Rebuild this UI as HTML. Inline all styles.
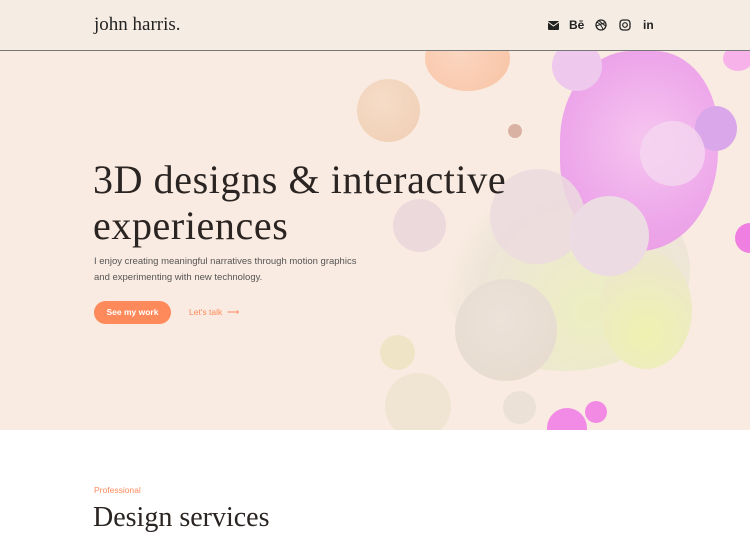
<!DOCTYPE html><html><head><style>
html,body{margin:0;width:750px;height:523px;overflow:hidden;background:#fff;font-family:"Liberation Sans",sans-serif}
.hd{position:absolute;left:0;top:0;width:750px;height:50px;background:#f5ede3;border-bottom:1px solid #777;z-index:5}
.logo{position:absolute;left:94px;top:14px;font:19px "Liberation Serif",serif;color:#222}
.ic{position:absolute;top:19px;height:14px;font-size:12px;font-weight:bold;color:#222}
.hero{position:absolute;left:0;top:51px;width:750px;height:379px;background:#f9ebe1;overflow:hidden}
.b{position:absolute;border-radius:50%}
h1{position:absolute;left:93px;top:157px;margin:0;font:400 40px/46px "Liberation Serif",serif;letter-spacing:0.6px;color:#2a2422;z-index:3}
p{position:absolute;left:94px;top:254px;margin:0;font-size:9.5px;line-height:16px;color:#555;z-index:3}
.btn{position:absolute;left:94px;top:301px;width:77px;height:23px;border-radius:12px;background:#fe8a5b;color:#fff;font-size:8.5px;font-weight:bold;text-align:center;line-height:23px;z-index:3}
.lt{position:absolute;left:189px;top:307px;font-size:8.5px;color:#fe8a5b;z-index:3}
</style></head><body>
<div class="hd"><div class="logo">john harris.</div>
<svg class="ic" style="left:548px;top:21px" width="11" height="9"><rect width="11" height="9" rx="1" fill="#222"/><path d="M0 1L5.5 5L11 1" stroke="#f5ede3" fill="none"/></svg>
<div class="ic" style="left:569px;top:18px">Bē</div>
<svg class="ic" style="left:595px;top:19px" width="12" height="12"><circle cx="6" cy="6" r="5" stroke="#222" fill="none" stroke-width="1.3"/><path d="M2 3Q7 6 8 11M1.5 7Q6 5 10.5 3.5M4 1.5Q7 5 11 7" stroke="#222" fill="none"/></svg>
<svg class="ic" style="left:619px;top:19px" width="12" height="12"><rect x="1" y="1" width="10" height="10" rx="3" stroke="#222" fill="none" stroke-width="1.3"/><circle cx="6" cy="6" r="2.3" stroke="#222" fill="none" stroke-width="1.2"/></svg>
<div class="ic" style="left:643px;top:18px">in</div></div>
<div class="hero">
<div class="b" style="left:425px;top:-25px;width:85px;height:65px;background:radial-gradient(circle at 40% 40%,#fbd6c0,#f8c3a4)"></div>
<div class="b" style="left:357px;top:28px;width:63px;height:63px;background:radial-gradient(circle at 40% 35%,#f6dcc8,#efceb3)"></div>
<div class="b" style="left:508px;top:73px;width:14px;height:14px;background:#d9b2a3"></div>
<div style="position:absolute;left:440px;top:120px;width:250px;height:200px;border-radius:50%;background:radial-gradient(circle at 60% 70%,#ecefc0,#eee5d8 55%,rgba(240,226,215,0) 72%)"></div>
<div style="position:absolute;left:560px;top:0;width:158px;height:200px;border-radius:45% 40% 50% 45%;background:radial-gradient(circle at 55% 45%,#f6c6ef,#eda6ea 60%,#e89ae0)"></div>
<div class="b" style="left:552px;top:-10px;width:50px;height:50px;background:#efc8ee"></div>
<div class="b" style="left:695px;top:55px;width:42px;height:45px;background:#d9a7ea"></div>
<div class="b" style="left:723px;top:-5px;width:30px;height:25px;background:#f6b2e9"></div>
<div class="b" style="left:735px;top:172px;width:30px;height:30px;background:#ef7fe0"></div>
<div class="b" style="left:600px;top:200px;width:92px;height:118px;background:radial-gradient(circle at 50% 70%,#eef2b0,#ede8c8 70%,rgba(237,232,210,.5))"></div>
<div class="b" style="left:490px;top:118px;width:95px;height:95px;background:rgba(236,218,222,.85)"></div>
<div class="b" style="left:569px;top:145px;width:80px;height:80px;background:#ecdbe3"></div>
<div class="b" style="left:640px;top:70px;width:65px;height:65px;background:rgba(245,215,240,.8)"></div>
<div class="b" style="left:393px;top:148px;width:53px;height:53px;background:#ecd9dc"></div>
<div class="b" style="left:455px;top:228px;width:102px;height:102px;background:radial-gradient(circle at 45% 40%,#ece2d9,#e6dacd)"></div>
<div class="b" style="left:380px;top:284px;width:35px;height:35px;background:#efe4c6"></div>
<div class="b" style="left:385px;top:322px;width:66px;height:66px;background:#efe5d2"></div>
<div class="b" style="left:503px;top:340px;width:33px;height:33px;background:#ece1d6"></div>
<div class="b" style="left:547px;top:357px;width:40px;height:40px;background:#f28be6"></div>
<div class="b" style="left:585px;top:350px;width:22px;height:22px;background:#f28ae3"></div>
</div>
<h1>3D designs &amp; interactive<br>experiences</h1>
<p>I enjoy creating meaningful narratives through motion graphics<br>and experimenting with new technology.</p>
<div class="btn">See my work</div>
<div class="lt">Let's talk &nbsp;⟶</div>
<div style="position:absolute;left:94px;top:485px;font-size:8.5px;color:#fe8a5b">Professional</div>
<div style="position:absolute;left:93px;top:502px;font:28px 'Liberation Serif',serif;color:#2a2422">Design services</div>
</body></html>
